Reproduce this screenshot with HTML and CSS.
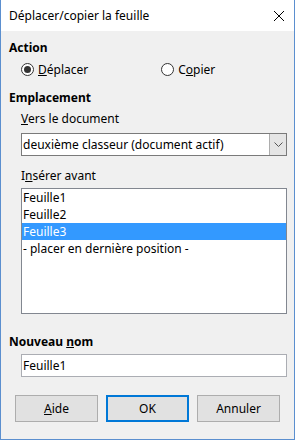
FILE: index.html
```html
<!DOCTYPE html>
<html lang="fr">
<head>
  <meta charset="UTF-8">
  <title>Déplacer/copier la feuille</title>
  <link rel="stylesheet" href="styles.css">
</head>
<body>
  <div class="window">
    <div class="titlebar">
      <span class="title">Déplacer/copier la feuille</span>
      <svg class="close" width="12" height="12" viewBox="0 0 12 12">
        <path d="M1 1 L11 11 M11 1 L1 11" stroke="#000" stroke-width="1" fill="none"/>
      </svg>
    </div>

    <div class="content">
      <div class="heading first">Action</div>
      <div class="radios">
        <label class="radio checked"><span class="dot"></span><span><u>D</u>éplacer</span></label>
        <label class="radio second"><span class="dot"></span><span>C<u>o</u>pier</span></label>
      </div>

      <div class="heading section">Emplacement</div>
      <div class="sub">
        <div class="label"><u>V</u>ers le document</div>
        <div class="select">
          <span class="select-text">deuxième classeur (document actif)</span>
          <span class="select-btn">
            <svg width="9" height="6" viewBox="0 0 9 6"><path d="M0.5 0.5 L4.5 4.5 L8.5 0.5" stroke="#555" fill="none"/></svg>
          </span>
        </div>

        <div class="label gap">I<u>n</u>sérer avant</div>
        <ul class="listbox">
          <li>Feuille1</li>
          <li>Feuille2</li>
          <li class="selected">Feuille3</li>
          <li>- placer en dernière position -</li>
        </ul>
      </div>

      <div class="heading name">Nouveau <u>n</u>om</div>
      <div class="sub">
        <div class="textbox">Feuille1</div>
      </div>

      <div class="buttons">
        <button><u>A</u>ide</button>
        <button class="default">OK</button>
        <button>Annuler</button>
      </div>
    </div>
  </div>
</body>
</html>
```

FILE: styles.css
```css
body {
  margin: 0;
  font-family: "Noto Sans", "Open Sans", sans-serif;
  font-size: 12px;
  color: #000;
  background: #f0f0f0;
}

.window {
  width: 295px;
  height: 440px;
  box-sizing: border-box;
  border: 1px solid #5b8fcf;
  border-top: none;
  background: #f0f0f0;
  display: flex;
  flex-direction: column;
}

.titlebar {
  height: 31px;
  background: #fff;
  display: flex;
  align-items: center;
  justify-content: space-between;
  padding: 0 9px 0 8px;
}

.title {
  line-height: 17px;
}

.close {
  display: block;
}

.content {
  padding: 0 8px;
  line-height: 17px;
}

.heading {
  font-weight: bold;
}

.first {
  margin-top: 8px;
}

.section {
  margin-top: 11px;
}

.name {
  margin-top: 19px;
}

.radios {
  display: flex;
  margin-top: 5px;
  padding-left: 12px;
}

.radio {
  display: flex;
  align-items: center;
  gap: 4px;
}

.radio.second {
  margin-left: 73px;
}

.dot {
  width: 11px;
  height: 11px;
  border: 1px solid #333;
  border-radius: 50%;
  background: #fff;
  position: relative;
}

.radio.checked .dot::after {
  content: "";
  position: absolute;
  left: 2px;
  top: 2px;
  width: 7px;
  height: 7px;
  border-radius: 50%;
  background: #333;
}

.sub {
  padding-left: 12px;
}

.label {
  margin-top: 4px;
}

.label.gap {
  margin-top: 11px;
}

.select {
  margin-top: 6px;
  height: 23px;
  box-sizing: border-box;
  border: 1px solid #7a7a7a;
  background: #fff;
  display: flex;
  align-items: center;
  justify-content: space-between;
  width: 266px;
}

.select-text {
  padding-left: 1px;
}

.select-btn {
  width: 17px;
  height: 21px;
  box-sizing: border-box;
  border-left: 1px solid #adadad;
  background: #e5e5e5;
  display: flex;
  align-items: center;
  justify-content: center;
}

.listbox {
  list-style: none;
  margin: 4px 0 0;
  padding: 0;
  width: 266px;
  height: 126px;
  box-sizing: border-box;
  border: 1px solid #828790;
  background: #fff;
}

.listbox li {
  height: 17px;
  padding-left: 1px;
}

.listbox li.selected {
  background: #3399ff;
  color: #fff;
}

.textbox {
  margin-top: 4px;
  width: 266px;
  height: 23px;
  box-sizing: border-box;
  border: 1px solid #abadb3;
  background: #fff;
  padding-left: 1px;
  display: flex;
  align-items: center;
}

.buttons {
  display: flex;
  gap: 8px;
  margin-top: 18px;
  padding-left: 6px;
}

button {
  width: 83px;
  height: 27px;
  font-family: inherit;
  font-size: 12px;
  color: #000;
  background: #e1e1e1;
  border: 1px solid #adadad;
  padding: 0;
}

button.default {
  border: 2px solid #0078d7;
}
```
